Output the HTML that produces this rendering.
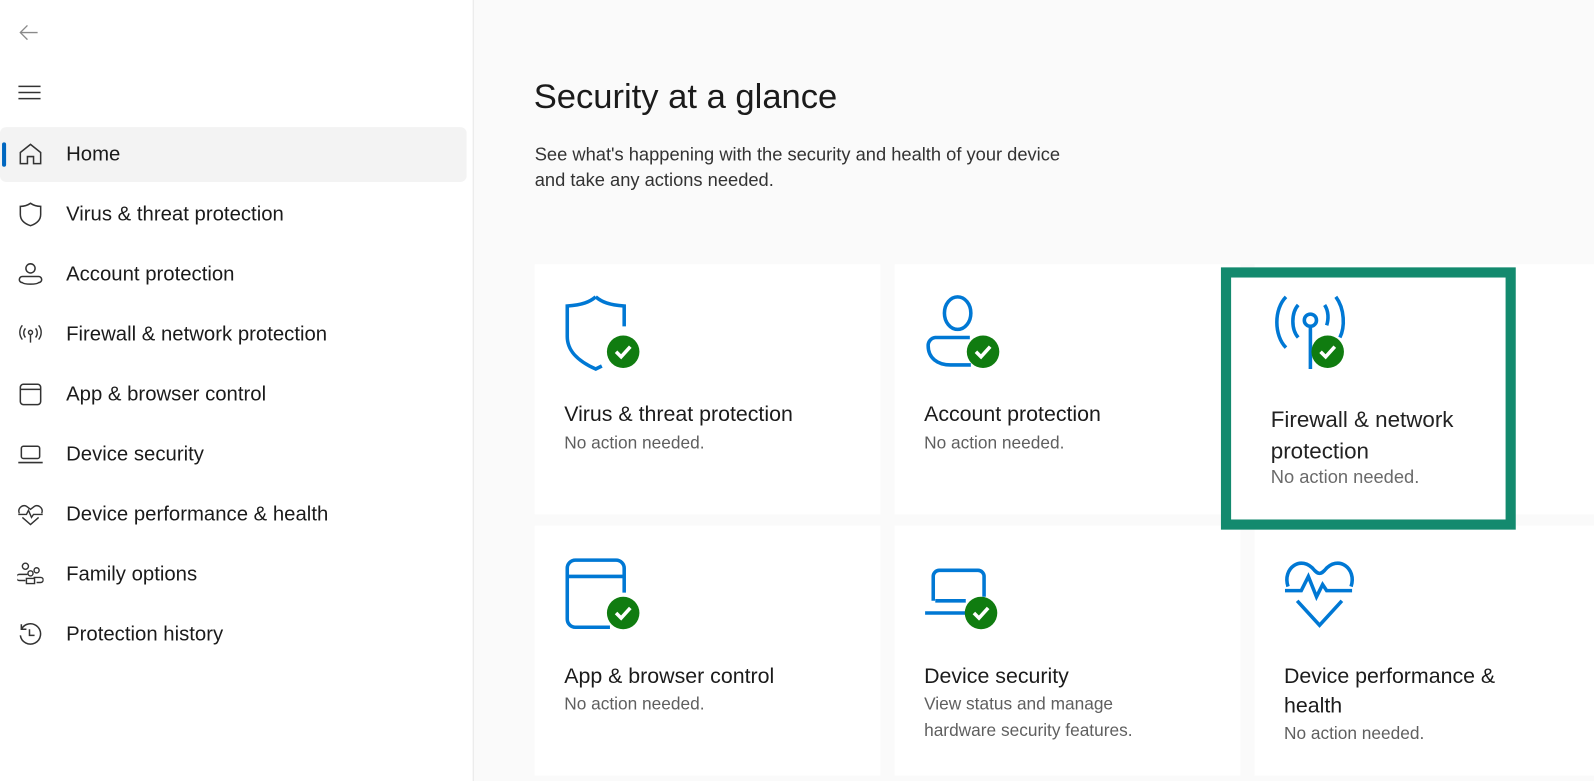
<!DOCTYPE html>
<html><head><meta charset="utf-8"><style>
*{margin:0;padding:0;box-sizing:border-box}
html,body{width:1594px;height:781px;overflow:hidden;background:#fafafa}
body{font-family:"Liberation Sans",sans-serif;color:#1b1b1b;position:relative}
#wrap{position:absolute;left:0;top:0;width:1568px;height:781px;transform:scale(1.0166);transform-origin:0 0}
#side{position:absolute;left:0;top:0;width:466px;height:781px;background:#fff;border-right:1px solid #e6e6e6}
.it{position:absolute;left:0;width:459px;height:54px;display:flex;align-items:center;font-size:20px}
.it svg{position:absolute;left:17px;width:26px;height:26px}
.it span{position:absolute;left:65px}
.card{position:absolute;background:#fff;width:340px;height:246px}
.card svg{position:absolute;left:28px;top:28px}
.t{position:absolute;left:29px;font-size:21px;color:#1b1b1b;line-height:29px}
.s{position:absolute;left:29px;font-size:17px;color:#5f5f5f;line-height:26px}
</style></head><body><div id="wrap">
<div id="side">
<svg style="position:absolute;left:18px;top:22px" width="20" height="20" viewBox="0 0 20 20" fill="none" stroke="#8a8a8a" stroke-width="1.3"><path d="M19 10H2M9 3L2 10l7 7"/></svg>
<svg style="position:absolute;left:18px;top:83px" width="22" height="16" viewBox="0 0 22 16" stroke="#333" stroke-width="1.5"><path d="M0 2h22M0 8h22M0 14h22"/></svg>
<div class="it" style="top:125px;background:#f3f3f3;border-radius:6px"><div style="position:absolute;left:2px;top:15px;width:4px;height:24px;background:#0067c0;border-radius:2px"></div>
<svg viewBox="0 0 26 26" fill="none" stroke="#333" stroke-width="1.5"><path d="M3 11L13 3l10 8v11H16v-7h-6v7H3z"/></svg><span>Home</span></div>
<div class="it" style="top:184px"><svg viewBox="0 0 26 26" fill="none" stroke="#333" stroke-width="1.5"><path d="M13 2C10 4 7 5 3 5v8c0 6 4 9 10 11 6-2 10-5 10-11V5c-4 0-7-1-10-3z"/></svg><span>Virus &amp; threat protection</span></div>
<div class="it" style="top:243px"><svg viewBox="0 0 26 26" fill="none" stroke="#333" stroke-width="1.5"><circle cx="13" cy="7" r="4.5"/><path d="M5 15h16a3 3 0 010 6c-2 2-14 2-16 0a3 3 0 010-6z"/></svg><span>Account protection</span></div>
<div class="it" style="top:302px"><svg viewBox="0 0 26 26" fill="none" stroke="#333" stroke-width="1.4"><circle cx="13" cy="11" r="2"/><path d="M13 13v8M8 7a7 7 0 000 9M18 7a7 7 0 010 9M5 4a11 11 0 000 14M21 4a11 11 0 010 14"/></svg><span>Firewall &amp; network protection</span></div>
<div class="it" style="top:361px"><svg viewBox="0 0 26 26" fill="none" stroke="#333" stroke-width="1.5"><rect x="3" y="3" width="20" height="20" rx="3"/><path d="M3 8h20"/></svg><span>App &amp; browser control</span></div>
<div class="it" style="top:420px"><svg viewBox="0 0 26 26" fill="none" stroke="#333" stroke-width="1.5"><rect x="4" y="5" width="18" height="12" rx="2"/><path d="M1 21h24"/></svg><span>Device security</span></div>
<div class="it" style="top:479px"><svg viewBox="0 0 26 26" fill="none" stroke="#333" stroke-width="1.4"><path d="M2 12c-2-5 3-9 7-7l4 3 4-3c4-2 9 2 7 7M1 13h8l2-4 3 7 2-3h9M5 16l8 7 8-7"/></svg><span>Device performance &amp; health</span></div>
<div class="it" style="top:538px"><svg viewBox="0 0 26 26" fill="none" stroke="#333" stroke-width="1.4"><circle cx="8" cy="5" r="3"/><circle cx="19" cy="9" r="2.5"/><circle cx="13" cy="12" r="2.5"/><path d="M2 13h8M2 13a3 3 0 000 6h6M16 16h7a2 2 0 010 5h-4M9 17h8v5H9z"/></svg><span>Family options</span></div>
<div class="it" style="top:597px"><svg viewBox="0 0 26 26" fill="none" stroke="#333" stroke-width="1.5"><path d="M4 8a10 10 0 11-1 6M4 3v5h5M12 8v6h5"/></svg><span>Protection history</span></div>
</div>
<div style="position:absolute;left:525px;top:76px;font-size:34px;color:#1b1b1b">Security at a glance</div>
<div style="position:absolute;left:526px;top:140px;font-size:18px;line-height:25px;color:#333">See what's happening with the security and health of your device<br>and take any actions needed.</div>

<div class="card" style="left:526px;top:260px"><svg width="80" height="80" viewBox="0 0 80 80" fill="none" stroke="#0078d4" stroke-width="3.5"><path d="M32 4C26 9 19 12 4 13v30c0 14 10 24 28 32l6-3"/><path d="M32 4c6 5 13 8 28 9v20"/><circle cx="59" cy="58" r="16" fill="#107c10" stroke="none"/><path d="M52 58l5 5 9-10" stroke="#fff" stroke-width="3.5"/></svg><div class="t" style="top:133px">Virus &amp; threat protection</div><div class="s" style="top:163px">No action needed.</div></div>
<div class="card" style="left:880px;top:260px"><svg width="80" height="80" viewBox="0 0 80 80" fill="none" stroke="#0078d4" stroke-width="3.5"><ellipse cx="34" cy="20" rx="13" ry="16"/><path d="M46 44H12a8 8 0 00-7 8c0 12 9 19 22 19h20"/><circle cx="59" cy="58" r="16" fill="#107c10" stroke="none"/><path d="M52 58l5 5 9-10" stroke="#fff" stroke-width="3.5"/></svg><div class="t" style="top:133px">Account protection</div><div class="s" style="top:163px">No action needed.</div></div>
<div class="card" style="left:1234px;top:260px;width:360px"></div>

<div class="card" style="left:526px;top:517px"><svg width="80" height="80" viewBox="0 0 80 80" fill="none" stroke="#0078d4" stroke-width="3.5"><path d="M46 72H12a8 8 0 01-8-8V14a8 8 0 018-8h40a8 8 0 018 8v24M4 22h56"/><circle cx="59" cy="58" r="16" fill="#107c10" stroke="none"/><path d="M52 58l5 5 9-10" stroke="#fff" stroke-width="3.5"/></svg><div class="t" style="top:134px">App &amp; browser control</div><div class="s" style="top:163px">No action needed.</div></div>
<div class="card" style="left:880px;top:517px"><svg width="80" height="80" viewBox="0 0 80 80" fill="none" stroke="#0078d4" stroke-width="3.5"><path d="M10 46V22a6 6 0 016-6h38a6 6 0 016 6v20M12 46h30M2 58h42"/><circle cx="57" cy="58" r="16" fill="#107c10" stroke="none"/><path d="M50 58l5 5 9-10" stroke="#fff" stroke-width="3.5"/></svg><div class="t" style="top:134px">Device security</div><div class="s" style="top:163px">View status and manage<br>hardware security features.</div></div>
<div class="card" style="left:1234px;top:517px;width:360px"><svg width="80" height="80" viewBox="0 0 80 80" fill="none" stroke="#0078d4" stroke-width="3.5"><path d="M5 32C-1 14 18 0 31 16c2 2 3 3 5 3 2 0 3-1 5-3 13-16 32-2 26 16M2 36h16l7-14 8 20 6-12 4 6h25M14 46l22 24 22-24"/></svg><div class="t" style="top:134px">Device performance &amp;<br>health</div><div class="s" style="top:192px">No action needed.</div></div>

<div style="position:absolute;z-index:2;left:1201px;top:263px;width:290px;height:258px;border:10px solid #138a6e;background:#fff">
<svg style="position:absolute;left:40px;top:15px" width="80" height="80" viewBox="0 0 80 80" fill="none" stroke="#0078d4" stroke-width="3.5"><path d="M14 4C2 16 2 42 14 54M26 12c-7 8-7 24 0 32M63 4c9 12 9 30 4 40M52 12c4 6 4 14 2 20"/><circle cx="38" cy="27" r="6"/><path d="M38 33v42"/><circle cx="55" cy="58" r="16" fill="#107c10" stroke="none"/><path d="M48 58l5 5 9-10" stroke="#fff" stroke-width="3.5"/></svg>
<div style="position:absolute;left:39px;top:124px;font-size:22px;line-height:31px;color:#222">Firewall &amp; network<br>protection</div>
<div style="position:absolute;left:39px;top:186px;font-size:18px;color:#6a6a6a">No action needed.</div></div>
</div></body></html>
